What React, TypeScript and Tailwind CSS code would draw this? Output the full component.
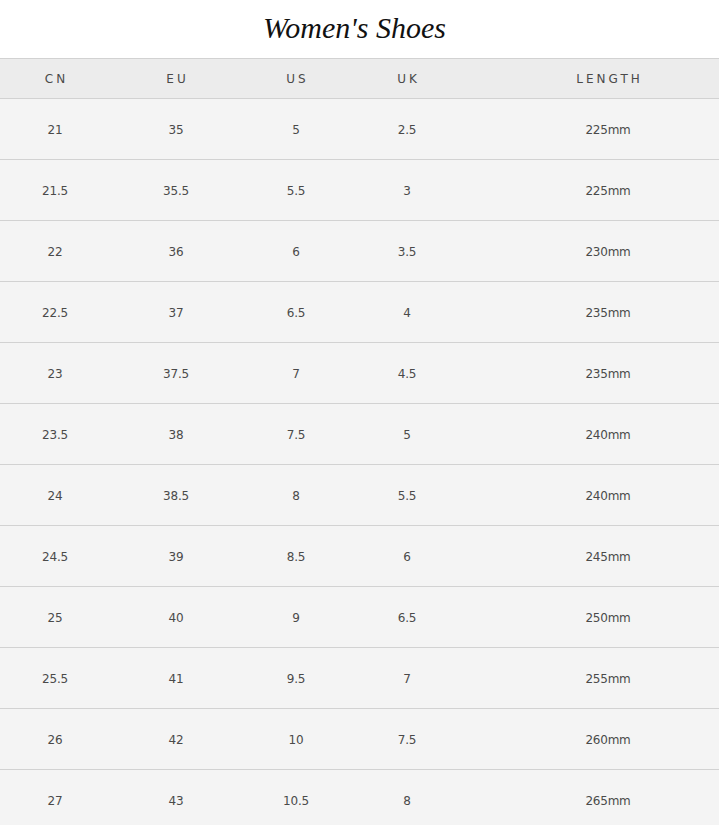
import React from "react";

const rows = [
  ["21", "35", "5", "2.5", "225mm"],
  ["21.5", "35.5", "5.5", "3", "225mm"],
  ["22", "36", "6", "3.5", "230mm"],
  ["22.5", "37", "6.5", "4", "235mm"],
  ["23", "37.5", "7", "4.5", "235mm"],
  ["23.5", "38", "7.5", "5", "240mm"],
  ["24", "38.5", "8", "5.5", "240mm"],
  ["24.5", "39", "8.5", "6", "245mm"],
  ["25", "40", "9", "6.5", "250mm"],
  ["25.5", "41", "9.5", "7", "255mm"],
  ["26", "42", "10", "7.5", "260mm"],
  ["27", "43", "10.5", "8", "265mm"],
];

const headers = ["CN", "EU", "US", "UK", "LENGTH"];

export default function App() {
  return (
    <div className="w-full overflow-hidden bg-white" style={{ fontFamily: "'DejaVu Sans', sans-serif" }}>
      <h1
        className="h-[58px] flex items-center justify-center text-[30px] italic text-[#111] pb-[4px] pr-[10px]"
        style={{ fontFamily: "'Liberation Serif', serif" }}
      >
        Women's Shoes
      </h1>
      <div className="w-[752px]">
        <div className="grid grid-cols-[110px_132px_108px_114px_288px] h-[41px] bg-[#ececec] border-t border-b border-[#d2d2d2] items-center text-[12px] tracking-[0.25em] text-[#4a4a4a] pt-px">
          {headers.map((h) => (
            <div key={h} className="text-center pl-[0.25em]">{h}</div>
          ))}
        </div>
        {rows.map((r, i) => (
          <div
            key={i}
            className="grid grid-cols-[110px_132px_108px_114px_288px] h-[61px] bg-[#f4f4f4] border-b border-[#d2d2d2] items-center text-[12px] text-[#4a4a4a] tracking-[-0.02em] pt-[2px]"
          >
            {r.map((c, j) => (
              <div key={j} className="text-center">{c}</div>
            ))}
          </div>
        ))}
      </div>
    </div>
  );
}
